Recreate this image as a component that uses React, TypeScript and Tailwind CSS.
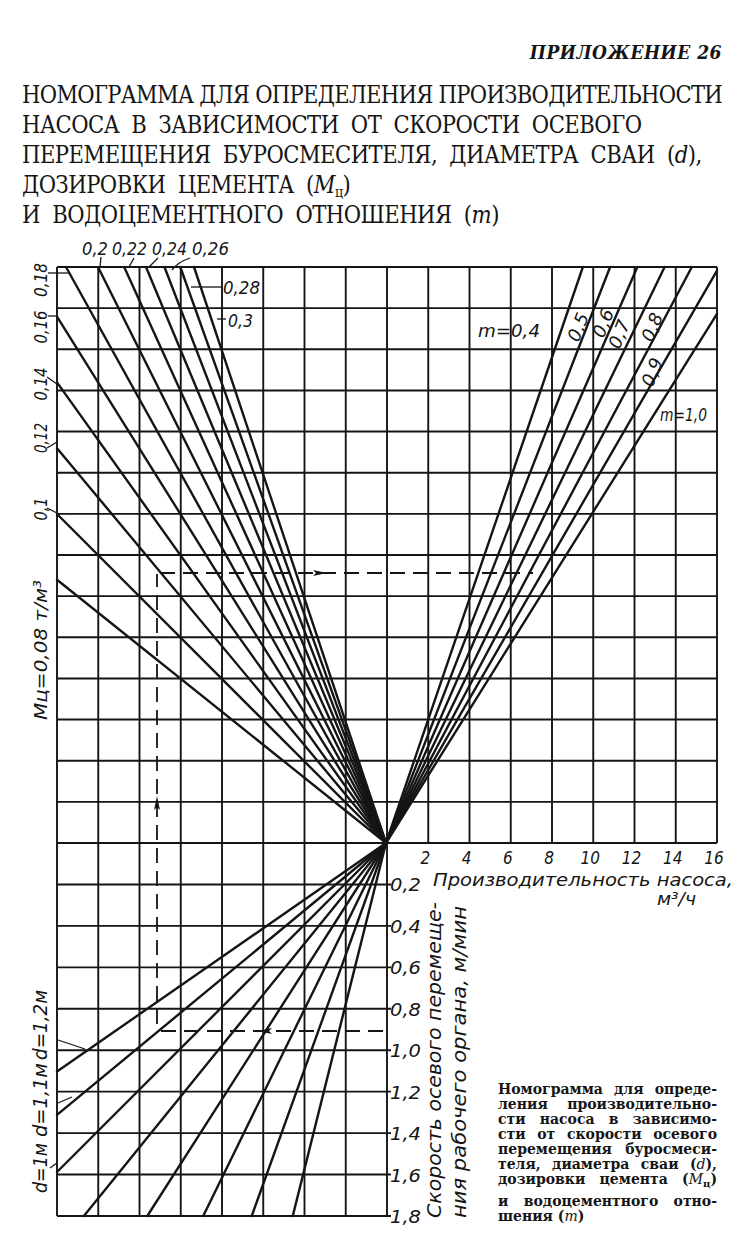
const INK = '#151515';

// grid geometry (page coordinates, svg viewBox starts at y=230)
const X0 = 57;
const X1 = 717;
const XO = 386;
const YT = 267;
const YO = 843;
const YB = 1216;
const CW = (X1 - X0) / 16;
const RH = (YO - YT) / 14;
const RL = (YB - YO) / 9;

const cementDoses = [0.08, 0.1, 0.12, 0.14, 0.16, 0.18, 0.2, 0.22, 0.24, 0.26, 0.28, 0.3];
const waterRatios = [0.4, 0.5, 0.6, 0.7, 0.8, 0.9, 1.0];
const diameters = [0.5, 0.6, 0.7, 0.8, 0.9, 1.0, 1.1, 1.2];

function cementEnd(M: number) {
    const s = 10 * M;
    const xTop = XO - (YO - YT) / s;
    if (xTop >= X0) return [xTop, YT];
    return [X0, YO - (XO - X0) * s];
}

function waterEnd(m: number) {
    const r = 0.473 * (0.3226 + m);
    const xTop = XO + (YO - YT) * r;
    if (xTop <= X1) return [xTop, YT];
    return [X1, YO - (X1 - XO) / r];
}

function diameterEnd(d: number) {
    const r = d * d;
    const xBot = XO - (YB - YO) * r;
    if (xBot >= X0) return [xBot, YB];
    return [X0, YO + (XO - X0) / r];
}

const label = {
    fontFamily: "'DejaVu Sans Condensed', 'DejaVu Sans', sans-serif",
    fontStyle: 'italic',
    fill: INK,
} as const;

function Chart() {
    const cols = Array.from({ length: 17 }, (_, i) => X0 + i * CW);
    const rowsTop = Array.from({ length: 15 }, (_, j) => YT + j * RH);
    const rowsLow = Array.from({ length: 10 }, (_, k) => YO + k * RL);

    return (
        <svg width={737} height={1026} viewBox="0 230 737 1026" className="block">
            {/* grid */}
            <g stroke={INK} strokeWidth={1.9}>
                {cols.map((x, i) => (
                    <line key={'v' + i} x1={x} y1={YT} x2={x} y2={i <= 8 ? YB : YO} />
                ))}
                {rowsTop.map((y, j) => (
                    <line key={'h' + j} x1={X0} y1={y} x2={X1} y2={y} />
                ))}
                {rowsLow.slice(1).map((y, k) => (
                    <line key={'l' + k} x1={X0} y1={y} x2={XO + 5} y2={y} />
                ))}
            </g>

            {/* fans */}
            <g stroke={INK} strokeWidth={2.4} strokeLinecap="round">
                {cementDoses.map((M) => {
                    const [x, y] = cementEnd(M);
                    return <line key={'c' + M} x1={XO} y1={YO} x2={x} y2={y} />;
                })}
                {waterRatios.map((m) => {
                    const [x, y] = waterEnd(m);
                    return <line key={'w' + m} x1={XO} y1={YO} x2={x} y2={y} />;
                })}
                {diameters.map((d) => {
                    const [x, y] = diameterEnd(d);
                    return <line key={'d' + d} x1={XO} y1={YO} x2={x} y2={y} />;
                })}
            </g>

            {/* leaders */}
            <g stroke={INK} strokeWidth={1.3} fill="none">
                <line x1={101} y1={257} x2={100} y2={267} />
                <line x1={134} y1={258} x2={129} y2={267} />
                <line x1={158} y1={258} x2={149} y2={267} />
                <path d="M190 258 Q178 262 172 270" />
                <line x1={221} y1={287} x2={191} y2={287} />
                <line x1={226} y1={319} x2={217} y2={319} />
                <line x1={48} y1={273} x2={70} y2={273} />
                <line x1={48} y1={316} x2={58} y2={316} />
                <line x1={47} y1={377} x2={57} y2={384} />
                <line x1={47} y1={448} x2={57} y2={442} />
                <line x1={47} y1={508} x2={57} y2={513} />
                <line x1={58} y1={1040} x2={85} y2={1049} />
                <line x1={58} y1={1103} x2={72} y2={1097} />
                <line x1={50} y1={1168} x2={57} y2={1163} />
            </g>

            {/* example path */}
            <g stroke={INK} strokeWidth={1.8} fill="none" strokeDasharray="15 8">
                <line x1={383} y1={1031} x2={160} y2={1031} />
                <line x1={157} y1={1024} x2={157} y2={574} />
                <line x1={160} y1={573} x2={533} y2={573} />
            </g>
            <g fill={INK}>
                <path d="M258 1031 L272 1028 L269 1031 L272 1034 Z" />
                <path d="M157 796 L154 810 L157 807 L160 810 Z" />
                <path d="M327 573 L313 570 L316 573 L313 576 Z" />
            </g>

            {/* top labels */}
            <g {...label} fontSize={18}>
                <text x={82} y={255} textLength={26} lengthAdjust="spacingAndGlyphs">0,2</text>
                <text x={112} y={255} textLength={35} lengthAdjust="spacingAndGlyphs">0,22</text>
                <text x={152} y={255} textLength={35} lengthAdjust="spacingAndGlyphs">0,24</text>
                <text x={192} y={255} textLength={37} lengthAdjust="spacingAndGlyphs">0,26</text>
                <text x={223} y={294} textLength={37} lengthAdjust="spacingAndGlyphs">0,28</text>
                <text x={228} y={327} textLength={25} lengthAdjust="spacingAndGlyphs">0,3</text>

                {[
                    ['0,18', 280, 34],
                    ['0,16', 327, 33],
                    ['0,14', 384, 33],
                    ['0,12', 438, 30],
                    ['0,1', 509, 23],
                ].map(([t, cy, tl]) => (
                    <text
                        key={t as string}
                        x={47}
                        y={cy as number}
                        transform={`rotate(-90 47 ${cy})`}
                        textAnchor="middle"
                        textLength={tl as number}
                        lengthAdjust="spacingAndGlyphs"
                    >
                        {t}
                    </text>
                ))}
                <text x={47} y={720} transform="rotate(-90 47 720)" textLength={140} lengthAdjust="spacingAndGlyphs">
                    Мц=0,08 т/м³
                </text>

                <text x={478} y={337} textLength={62} lengthAdjust="spacingAndGlyphs">m=0,4</text>
                <text x={660} y={421} textLength={47} lengthAdjust="spacingAndGlyphs">m=1,0</text>
                {[
                    ['0,5', 578, 327],
                    ['0,6', 603, 323],
                    ['0,7', 619, 334],
                    ['0,8', 652, 327],
                    ['0,9', 652, 372],
                ].map(([t, cx, cy]) => (
                    <text
                        key={t as string}
                        x={cx as number}
                        y={cy as number}
                        transform={`rotate(-68 ${cx} ${cy})`}
                        textAnchor="middle"
                        dominantBaseline="central"
                        textLength={29}
                        lengthAdjust="spacingAndGlyphs"
                    >
                        {t}
                    </text>
                ))}
            </g>

            {/* pump capacity axis */}
            <g {...label} fontSize={17}>
                {['2', '4', '6', '8', '10', '12', '14', '16'].map((t, i) => (
                    <text key={t} x={cols[9 + i] - 3} y={864} textAnchor="middle">
                        {t}
                    </text>
                ))}
                <text x={433} y={886} textLength={300} lengthAdjust="spacingAndGlyphs">
                    Производительность насоса,
                </text>
                <text x={657} y={905} textLength={39} lengthAdjust="spacingAndGlyphs">
                    м³/ч
                </text>

                {/* speed axis */}
                {['0,2', '0,4', '0,6', '0,8', '1,0', '1,2', '1,4', '1,6', '1,8'].map((t, k) => (
                    <text key={t} x={390} y={rowsLow[k + 1] + 7} textLength={31} lengthAdjust="spacingAndGlyphs">
                        {t}
                    </text>
                ))}
            </g>

            <g {...label} fontSize={20}>
                <text x={441} y={1218} transform="rotate(-90 441 1218)" textLength={316} lengthAdjust="spacingAndGlyphs">
                    Скорость осевого перемеще-
                </text>
                <text x={466} y={1218} transform="rotate(-90 466 1218)" textLength={312} lengthAdjust="spacingAndGlyphs">
                    ния рабочего органа, м/мин
                </text>
                <text x={47} y={1168} transform="rotate(-90 47 1168)" textAnchor="middle" textLength={50} lengthAdjust="spacingAndGlyphs">
                    d=1м
                </text>
                <text x={47} y={1100} transform="rotate(-90 47 1100)" textAnchor="middle" textLength={74} lengthAdjust="spacingAndGlyphs">
                    d=1,1м
                </text>
                <text x={47} y={1025} transform="rotate(-90 47 1025)" textAnchor="middle" textLength={70} lengthAdjust="spacingAndGlyphs">
                    d=1,2м
                </text>
            </g>
        </svg>
    );
}

const captionLines = [
    <>Номограмма для опреде-</>,
    <>ления производительно-</>,
    <>сти насоса в зависимо-</>,
    <>сти от скорости осевого</>,
    <>перемещения буросмеси-</>,
    <>теля, диаметра сваи (<i className="font-normal">d</i>),</>,
    <>дозировки цемента (<i className="font-normal">M</i><sub className="text-[10px]">ц</sub>)</>,
    <>и водоцементного отно-</>,
];

export default function App() {
    return (
        <div className="w-[737px] h-[1256px] bg-white text-[#151515] overflow-hidden">
            <header className="h-[230px] pt-[41px] pl-[22px] pr-[15px] font-['DejaVu_Serif_Condensed','DejaVu_Serif',serif]">
                <div className="text-right italic font-bold text-[19px] leading-[22px] tracking-[0.5px]">
                    ПРИЛОЖЕНИЕ 26
                </div>
                <div className="mt-[17px] text-[23.5px] leading-[30px] tracking-[-0.5px] whitespace-nowrap">
                    <div className="tracking-[-0.7px]">НОМОГРАММА ДЛЯ ОПРЕДЕЛЕНИЯ ПРОИЗВОДИТЕЛЬНОСТИ</div>
                    <div className="[word-spacing:6px]">НАСОСА В ЗАВИСИМОСТИ ОТ СКОРОСТИ ОСЕВОГО</div>
                    <div className="[word-spacing:6px]">
                        ПЕРЕМЕЩЕНИЯ БУРОСМЕСИТЕЛЯ, ДИАМЕТРА СВАИ (<i>d</i>),
                    </div>
                    <div className="[word-spacing:6px]">
                        ДОЗИРОВКИ ЦЕМЕНТА (<i>M</i>
                        <sub className="text-[14px]">ц</sub>)
                    </div>
                    <div className="[word-spacing:6px]">
                        И ВОДОЦЕМЕНТНОГО ОТНОШЕНИЯ (<i>m</i>)
                    </div>
                </div>
            </header>

            <div className="relative">
                <Chart />
                <div className="absolute left-[498px] top-[852px] w-[219px] font-['DejaVu_Serif',serif] font-bold text-[14px] leading-[15px] whitespace-nowrap">
                    {captionLines.map((line, i) => (
                        <div key={i} className={`text-justify [text-align-last:justify] ${i === 7 ? 'mt-[7px]' : ''}`}>
                            {line}
                        </div>
                    ))}
                    <div>
                        шения (<i className="font-normal">m</i>)
                    </div>
                </div>
            </div>
        </div>
    );
}
